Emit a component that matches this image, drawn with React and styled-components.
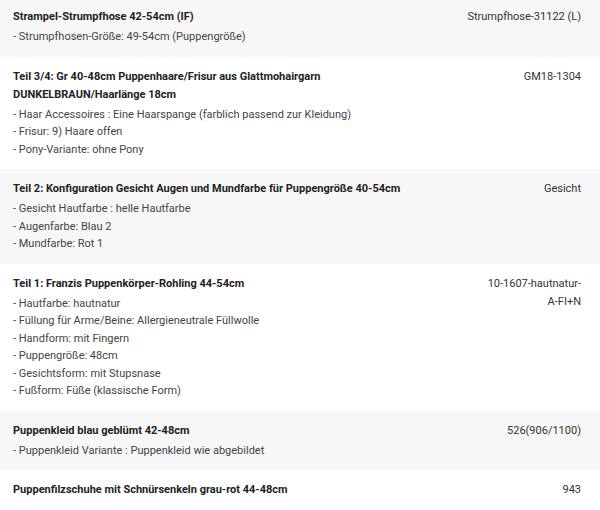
import React from 'react';
import styled, { createGlobalStyle } from 'styled-components';

const GlobalStyle = createGlobalStyle`
  body {
    margin: 0;
    background: #fff;
    font-family: Roboto, "Liberation Sans", sans-serif;
    overflow: hidden;
  }
`;

const List = styled.div`
  margin-top: -3px;
`;

const Row = styled.div`
  display: flex;
  gap: 20px;
  padding: 11px 19px 11px 13px;
  background: ${p => (p.$shaded ? '#f7f7f7' : '#fff')};
`;

const Info = styled.div`
  flex: 1;
  min-width: 0;
`;

const Title = styled.div`
  font-size: 11px;
  font-weight: 700;
  line-height: 18px;
  color: #222;
  margin-bottom: 2px;
`;

const Option = styled.div`
  font-size: 11px;
  line-height: 17.5px;
  color: #444;
`;

const Sku = styled.div`
  width: 118px;
  flex-shrink: 0;
  text-align: right;
  font-size: 11px;
  line-height: 18px;
  color: #333;

  span {
    display: inline-block;
    max-width: ${p => p.$wrap || 118}px;
  }
`;

const items = [
  {
    title: 'Strampel-Strumpfhose 42-54cm (IF)',
    sku: 'Strumpfhose-31122 (L)',
    options: ['- Strumpfhosen-Größe: 49-54cm (Puppengröße)'],
  },
  {
    title: 'Teil 3/4: Gr 40-48cm Puppenhaare/Frisur aus Glattmohairgarn DUNKELBRAUN/Haarlänge 18cm',
    sku: 'GM18-1304',
    options: [
      '- Haar Accessoires : Eine Haarspange (farblich passend zur Kleidung)',
      '- Frisur: 9) Haare offen',
      '- Pony-Variante: ohne Pony',
    ],
  },
  {
    title: 'Teil 2: Konfiguration Gesicht Augen und Mundfarbe für Puppengröße 40-54cm',
    sku: 'Gesicht',
    options: [
      '- Gesicht Hautfarbe : helle Hautfarbe',
      '- Augenfarbe: Blau 2',
      '- Mundfarbe: Rot 1',
    ],
  },
  {
    title: 'Teil 1: Franzis Puppenkörper-Rohling 44-54cm',
    sku: '10-1607-hautnatur-A-FI+N',
    wrap: 98,
    options: [
      '- Hautfarbe: hautnatur',
      '- Füllung für Arme/Beine: Allergieneutrale Füllwolle',
      '- Handform: mit Fingern',
      '- Puppengröße: 48cm',
      '- Gesichtsform: mit Stupsnase',
      '- Fußform: Füße (klassische Form)',
    ],
  },
  {
    title: 'Puppenkleid blau geblümt 42-48cm',
    sku: '526(906/1100)',
    options: ['- Puppenkleid Variante : Puppenkleid wie abgebildet'],
  },
  {
    title: 'Puppenfilzschuhe mit Schnürsenkeln grau-rot 44-48cm',
    sku: '943',
    options: [],
  },
];

const App = () => (
  <>
    <GlobalStyle />
    <List>
      {items.map((item, i) => (
        <Row key={item.sku} $shaded={i % 2 === 0}>
          <Info>
            <Title>{item.title}</Title>
            {item.options.map(o => (
              <Option key={o}>{o}</Option>
            ))}
          </Info>
          <Sku $wrap={item.wrap}>
            <span>{item.sku}</span>
          </Sku>
        </Row>
      ))}
    </List>
  </>
);

export default App;
